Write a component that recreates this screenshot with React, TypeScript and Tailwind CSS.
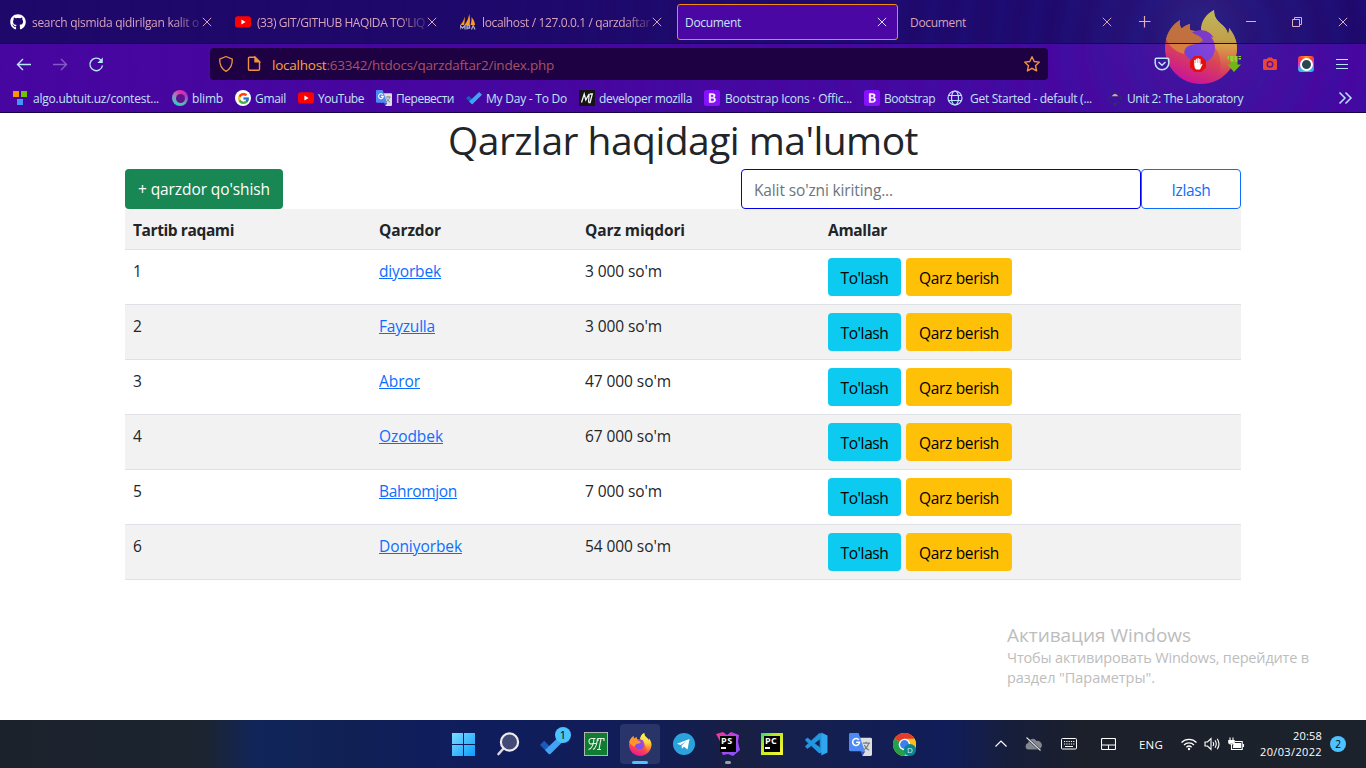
import { useLayoutEffect, useRef, type ReactNode } from "react";
import { FaGithub } from "react-icons/fa";
import { FcGoogle } from "react-icons/fc";
import { VscVscode } from "react-icons/vsc";

/** Single-line text whose letter spacing is adjusted so it spans `w` pixels. */
function Fit({ w, className = "", children }: { w: number; className?: string; children: ReactNode }) {
  const ref = useRef<HTMLSpanElement>(null);
  useLayoutEffect(() => {
    const el = ref.current;
    if (!el) return;
    el.style.letterSpacing = "0px";
    const natural = el.getBoundingClientRect().width;
    const count = (el.textContent || "").length;
    el.style.letterSpacing = `${(w - natural) / count}px`;
  }, [w]);
  return (
    <span ref={ref} className={`inline-block whitespace-pre ${className}`}>
      {children}
    </span>
  );
}

/* ---------- small logos ---------- */

function YouTube() {
  return (
    <svg width="16" height="16" viewBox="0 0 16 16">
      <rect x="0" y="2.2" width="16" height="11.4" rx="2.8" fill="#f00" />
      <path d="M6.4 5.6v4.8L10.6 8z" fill="#fff" />
    </svg>
  );
}

function PhpMyAdmin() {
  return (
    <svg width="16" height="16" viewBox="0 0 16 16">
      <path d="M4.500 2.500c.5 3 .2 6-.5 8.500H.5c2-2.500 3.500-5 4-8.500zM9.200 0c1 4 1 7.500.4 11H4.500c2.500-3 4-7 4.700-11zM11.500 3c2.200 2.500 3.300 5 3.500 8h-4.500c.9-3 1.200-5 1-8z" fill="#fb9a1c" />
      <path d="M0 15.500v-4l2.500 2.500L5 11.500v4M7 15.500v-4h2.500v2.500H7M11.500 15.500l1.700-4 1.800 4" stroke="#a9adc2" fill="none" strokeWidth="1.300" />
    </svg>
  );
}

function Translate({ size }: { size: number }) {
  return (
    <svg width={size} height={size} viewBox="0 0 24 24">
      <path d="M10 5h12.500A1.500 1.500 0 0 1 24 6.500v16a1.500 1.500 0 0 1-1.500 1.500H14z" fill="#dedede" />
      <path d="M14.500 10.500h7.500M18 9v1.500M20.500 10.500c-.6 3-2.500 5.500-5 7M16 12.500c1 2.500 3 4.500 5 5.500" stroke="#6b7f86" fill="none" strokeWidth="1.300" />
      <path d="M14 24l-2-5h5z" fill="#3458c0" />
      <path d="M1.500 0H10l6.500 19h-15A1.500 1.500 0 0 1 0 17.500v-16A1.500 1.500 0 0 1 1.500 0z" fill="#4f8af4" />
      <path d="M10.300 7.200A3.600 3.600 0 1 0 11 9.600H7.500" stroke="#fff" fill="none" strokeWidth="1.600" />
    </svg>
  );
}

function TodoCheck({ size }: { size: number }) {
  return (
    <svg width={size} height={size} viewBox="0 0 24 24">
      <path d="M0 12.500L4 8.500l8.500 8.300-4.100 4.200z" fill="#185abd" />
      <path d="M8.400 21L4.800 17.300 19.700 3 24 7.200 10 21q-.8.7-1.600 0z" fill="#40a4f2" />
    </svg>
  );
}

function Bootstrap() {
  return (
    <svg width="16" height="16" viewBox="0 0 16 16">
      <rect width="16" height="16" rx="2.500" fill="#8512fa" />
      <path d="M5.200 3.500h3.300c1.700 0 2.700.8 2.700 2.100 0 1-.6 1.700-1.500 2 1.200.2 1.900 1 1.900 2.200 0 1.700-1.200 2.700-3.200 2.700H5.200zm1.500 1.200v2.500h1.400c1.100 0 1.600-.4 1.600-1.300 0-.8-.5-1.200-1.500-1.200zm0 3.600v3h1.600c1.200 0 1.800-.5 1.800-1.500s-.7-1.500-1.900-1.500z" fill="#fff" stroke="#fff" strokeWidth=".4" />
    </svg>
  );
}

function Firefox({ size }: { size: number }) {
  return (
    <svg width={size} height={size} viewBox="0 0 74 74">
      <defs>
        <linearGradient id="fxBody" x1=".8" y1="0" x2=".4" y2="1">
          <stop offset="0" stopColor="#fff044" />
          <stop offset=".35" stopColor="#ffa51f" />
          <stop offset=".65" stopColor="#ff4f45" />
          <stop offset="1" stopColor="#ee1496" />
        </linearGradient>
        <linearGradient id="fxCore" x1="1" y1="0" x2="0" y2="1">
          <stop offset="0" stopColor="#b04ae6" />
          <stop offset="1" stopColor="#6850ee" />
        </linearGradient>
        <linearGradient id="fxTail" x1="0" y1="0" x2="0" y2="1">
          <stop offset="0" stopColor="#fff44f" />
          <stop offset=".45" stopColor="#ffd83a" />
          <stop offset="1" stopColor="#ff7339" stopOpacity="0" />
        </linearGradient>
      </defs>
      <path d="M15 10c-1 3 0 6 1.500 8.500C19 16 22 15 25 14c-.5 2-.5 4 0 6l11 2c0-9 5-17 13-22 0 4 1 8 4 11 4 4 9 7 10 13 1-2 1-4 1-6 5 6 8 13 8 20 0 20-16 36-36 36S0 58 0 38C0 27 6 16 15 10z" fill="url(#fxBody)" />
      <path d="M22 27q6-7 14-7c6 0 10 3 13 8l-3-1c3 4 4 7 4 11 0 8-6 15-15 15s-16-7-16-15z" fill="url(#fxCore)" />
      <path d="M1 29C3 21 8 14 15 10c-1 3 0 6 1.500 8.500C19 16 22 15 25 14c-.5 3 0 7 3 9 3 2 8 3 10 7-2 4-8 4-12 5-4 1-7 4-7 9C11 42 5 37 1 29z" fill="#ff952a" />
      <path d="M36 20c0-9 5-16 13-20 0 4 1 8 4 11 4 4 9 7 10 13 1-2 1-4 1-6 5 6 8 13 8 20 0 12-7 24-18 29 3-11 2-23-4-29 0-5-1-8-4-11l3 1c-3-5-7-8-13-8z" fill="url(#fxTail)" />
    </svg>
  );
}

const Close = ({ size = 10 }: { size?: number }) => (
  <svg width={size} height={size} viewBox="0 0 10 10" fill="none" stroke="currentColor" strokeWidth="1">
    <path d="M.8.8l8.400 8.400M9.200.8L.8 9.200" />
  </svg>
);

/* ---------- browser chrome ---------- */

function Tab({ icon, title, w, active = false }: { icon?: ReactNode; title: string; w: number; active?: boolean }) {
  return (
    <div
      className={`flex h-9 w-[221px] shrink-0 items-center rounded-[3px] border pr-[10px] pl-[7px] ${
        active ? "border-[#f98a10] bg-[#4b07a3] text-[#c5e4f8]" : "border-transparent text-[#d9a3b9]"
      }`}
    >
      {icon && <div className="mr-[6px] flex w-4 shrink-0 justify-center">{icon}</div>}
      <div
        className={`min-w-0 flex-1 translate-y-px overflow-hidden text-[12px] leading-5 ${
          icon ? "[mask-image:linear-gradient(to_right,#000_84%,transparent_104%)]" : ""
        }`}
      >
        <Fit w={w}>{title}</Fit>
      </div>
      <div className="ml-[2px] shrink-0">
        <Close />
      </div>
    </div>
  );
}

function Toolbar() {
  return (
    <div className="flex h-10 items-center">
      <div className="flex w-[210px] gap-[18px] pl-[15px] text-[#b5e6fb]">
        <svg width="18" height="18" viewBox="0 0 18 18" fill="none" stroke="currentColor" strokeWidth="1.400">
          <path d="M16 9.500H2.500M8 4L2.500 9.500 8 15" />
        </svg>
        <svg width="18" height="18" viewBox="0 0 18 18" fill="none" stroke="#815ac5" strokeWidth="1.400">
          <path d="M2 9.500h13.500M10 4l5.500 5.500L10 15" />
        </svg>
        <svg width="18" height="18" viewBox="0 0 18 18" fill="none" stroke="currentColor" strokeWidth="1.400">
          <path d="M14 5.200A6.300 6.300 0 1 0 15.500 10.500" />
          <path d="M15.800 2.500v5.500H10.300z" fill="currentColor" stroke="none" />
        </svg>
      </div>
      <div className="flex h-8 w-[838px] items-center rounded bg-[#1d0143] pr-[7px] pl-[8px] text-[#ef9340]">
        <svg className="shrink-0" width="16" height="18" viewBox="0 0 16 18" fill="none" stroke="currentColor" strokeWidth="1.300">
          <path d="M8 1.500l6.300 2.600c.2 6-1.800 9.900-6.300 12.200C3.500 14 1.500 10 1.700 4.100z" strokeLinejoin="round" />
        </svg>
        <svg className="ml-[13px] shrink-0" width="14" height="16" viewBox="0 0 14 16" fill="none" stroke="currentColor" strokeWidth="1.400">
          <path d="M1.500 2.200q0-1 1-1H8l4.500 4.500v7.600q0 1-1 1h-9q-1 0-1-1z" />
          <path d="M8 1.200v4.500h4.500z" fill="currentColor" />
        </svg>
        <div className="ml-[11px] flex-1 translate-y-px text-[13.5px] leading-5">
          <Fit w={282} className="text-[#a65364]">
            <span className="text-[#fca336]">localhost</span>:63342/htdocs/qarzdaftar2/index.php
          </Fit>
        </div>
        <svg width="18" height="18" viewBox="0 0 18 18" fill="none" stroke="currentColor" strokeWidth="1.400" strokeLinejoin="round">
          <path d="M9 1.700l2.200 4.800 5.200.6-3.900 3.600 1.100 5.200L9 13.300l-4.600 2.600 1.100-5.200-3.900-3.600 5.200-.6z" />
        </svg>
      </div>
      <div className="ml-[105px] flex items-center gap-[18px] text-[#b5e6fb]">
        <svg width="18" height="16" viewBox="0 0 18 16" fill="none" stroke="currentColor" strokeWidth="1.500">
          <path d="M3.500 2.200h11q1.300 0 1.300 1.300V7a6.800 6.800 0 0 1-13.600 0V3.500q0-1.300 1.300-1.300z" />
          <path d="M5.500 6L9 9.200 12.500 6" />
        </svg>
        <svg width="18" height="18" viewBox="0 0 18 18">
          <path d="M5.700 1h6.600L17 5.700v6.600L12.300 17H5.700L1 12.300V5.700z" fill="#e50d0d" />
          <path d="M5.200 9.500V5.200q.8-.8 1.300 0V8h.3V3.900q.8-.8 1.400 0V8h.3V3.400q.8-.8 1.400 0V8h.3V4.200q.8-.8 1.300 0V10l1-1.300q1-.3.9.7L11 14.500H7.200Q5.200 13 5.200 9.500z" fill="#fff" />
        </svg>
        <svg width="18" height="18" viewBox="0 0 18 18">
          <path d="M5.500 6h7v3.500H16L9 17 2 9.500h3.500z" fill="#70b715" />
          <path d="M2.500 1H4v3.500H2.500zM5 1h3v5.500H5.500zM8.500 1h1v5.500h-1zM10 1h2.500v5.500H10zM13.500 1h2.500v1h-2.500zm0 2h2.500v1.500h-2.500z" fill="#8fd62e" />
        </svg>
        <svg width="18" height="18" viewBox="0 0 18 18">
          <path d="M3.500 4H6l1-1.500h4L12 4h2.500Q16 4 16 5.500v8q0 1.500-1.500 1.500h-11Q2 15 2 13.500v-8Q2 4 3.500 4z" fill="#eb4537" />
          <circle cx="9" cy="9.300" r="2.800" fill="none" stroke="#5a16a0" strokeWidth="1.500" />
        </svg>
        <div className="flex size-[18px] items-center justify-center">
          <div className="flex size-4 items-center justify-center rounded-[3px] bg-[conic-gradient(#ff9d1c,#ff3b30,#c83cf0,#27b7f5,#2bd8b0,#38b9f5,#ec2ad1,#ff3b30,#ff9d1c)]">
            <div className="size-[13px] rounded-full border-2 border-white bg-[#2c4650]" />
          </div>
        </div>
        <svg width="18" height="18" viewBox="0 0 18 18" stroke="currentColor" strokeWidth="1.200">
          <path d="M3 4.500h12M3 9.500h12M3 13.500h12" />
        </svg>
      </div>
    </div>
  );
}

const bookmarks: { icon: ReactNode; label: string; w: number; box: string }[] = [
  {
    icon: (
      <svg width="16" height="16" viewBox="0 0 16 16">
        <path d="M1 1h6v6H1z" fill="#ff9200" />
        <path d="M9 1h6v6H9z" fill="#6cc400" />
        <path d="M5 9h6v6H5z" fill="#4396f5" />
      </svg>
    ),
    label: "algo.ubtuit.uz/contest...",
    w: 126,
    box: "w-[160px] gap-[5px]",
  },
  {
    icon: (
      <span className="flex size-4 items-center justify-center rounded-full bg-[conic-gradient(#e42bab,#a63ec0,#53b9b0,#36c9bd,#8b91bd,#e9329d)]">
        <span className="size-[9px] rounded-full bg-[#61108f]" />
      </span>
    ),
    label: "blimb",
    w: 31,
    box: "w-[63px] gap-[4px]",
  },
  {
    icon: (
      <span className="flex size-4 items-center justify-center rounded-full bg-white">
        <FcGoogle size={13} />
      </span>
    ),
    label: "Gmail",
    w: 31,
    box: "w-[63px] gap-[4px]",
  },
  { icon: <YouTube />, label: "YouTube", w: 46, box: "w-[78px] gap-[4px]" },
  { icon: <Translate size={16} />, label: "Перевести", w: 58, box: "w-[90px] gap-[4px]" },
  { icon: <TodoCheck size={16} />, label: "My Day - To Do", w: 81, box: "w-[113px] gap-[4px]" },
  {
    icon: (
      <svg width="16" height="16" viewBox="0 0 16 16">
        <path d="M0 0h16v16H0z" fill="#151515" />
        <path d="M2.500 12.500L5.200 4l1.600 6 3.300-6-.6 8.500M9.500 12.500h1.600L13.300 4h-2.500" stroke="#f4f4f4" fill="none" strokeWidth="1.300" />
      </svg>
    ),
    label: "developer mozilla",
    w: 93,
    box: "w-[125px] gap-[4px]",
  },
  { icon: <Bootstrap />, label: "Bootstrap Icons · Offic...", w: 127, box: "w-[160px] gap-[5px]" },
  { icon: <Bootstrap />, label: "Bootstrap", w: 51, box: "w-[83px] gap-[4px]" },
  {
    icon: (
      <svg width="16" height="16" viewBox="0 0 16 16" fill="none" stroke="#b5e6fb" strokeWidth="1.200">
        <circle cx="8" cy="8" r="7" />
        <ellipse cx="8" cy="8" rx="3.500" ry="7" />
        <path d="M1.500 5.500h13M1.500 10.500h13" />
      </svg>
    ),
    label: "Get Started - default (...",
    w: 122,
    box: "w-[160px] gap-[7px]",
  },
  {
    icon: (
      <svg width="16" height="16" viewBox="0 0 16 16">
        <circle cx="8" cy="8" r="6" fill="none" stroke="#2b2a6a" strokeWidth="1.800" strokeDasharray="2.500 1.800" />
        <path d="M4.500 6.500q3.500-5.500 7 0z" fill="#d7a1b5" />
        <path d="M4.500 6.500h7V8h-7z" fill="#332344" />
        <path d="M6.500 13h3v2h-3z" fill="#303463" />
      </svg>
    ),
    label: "Unit 2: The Laboratory",
    w: 116,
    box: "w-[231px] gap-[4px]",
  },
];

function Browser() {
  return (
    <header className="relative h-[113px] overflow-hidden border-b border-[#190343] bg-[radial-gradient(circle_at_1202px_20px,rgba(70,60,150,0.5)_0px,rgba(60,45,150,0.3)_60px,transparent_150px),linear-gradient(to_bottom,#20096b_43px,#4806a0_43px)]">
      <div className="absolute inset-0 bg-[repeating-radial-gradient(circle_at_1202px_48px,rgba(30,40,170,0.2)_0px,rgba(90,10,170,0.03)_17px,rgba(30,40,170,0.2)_34px)] [mask-image:linear-gradient(to_right,rgba(0,0,0,0.15)_30%,#000_80%)]" />
      <div className="absolute top-[10px] left-[1165px] opacity-80">
        <Firefox size={74} />
      </div>
      <div className="relative flex h-11 items-center border-b border-[#190653] bg-[#180a63]/10 pl-[2px]">
        <div className="flex gap-1">
          <Tab icon={<FaGithub size={16} color="#fff" />} title="search qismida qidirilgan kalit o" w={167} />
          <Tab icon={<YouTube />} title="(33) GIT/GITHUB HAQIDA TO'LIQ" w={168} />
          <Tab icon={<PhpMyAdmin />} title="localhost / 127.0.0.1 / qarzdaftar" w={168} />
          <Tab title="Document" w={56} active />
          <Tab title="Document" w={56} />
        </div>
        <div className="flex flex-1 items-center text-[#deb0bd]">
          <svg className="ml-[15px]" width="13" height="13" viewBox="0 0 13 13" stroke="currentColor" strokeWidth="1.200">
            <path d="M6.500 1v11.500M1 6.500h11.500" />
          </svg>
          <svg className="ml-[95px]" width="10" height="12" viewBox="0 0 10 12" stroke="currentColor">
            <path d="M0 5.500h10" />
          </svg>
          <svg className="ml-[36px]" width="10" height="10" viewBox="0 0 10 10" stroke="currentColor" fill="none">
            <path d="M.5 2.500h7v7h-7zM2.500 2.500v-2h7v7h-2" />
          </svg>
          <div className="ml-[36px]">
            <Close />
          </div>
        </div>
      </div>
      <div className="relative">
        <Toolbar />
        <div className="flex h-[28px] items-center pl-[12px] text-[12px] leading-5 text-[#c0e4f9]">
          {bookmarks.map((b, i) => (
            <div key={i} className={`flex shrink-0 items-center ${b.box}`}>
              {b.icon}
              <Fit w={b.w} className="translate-y-px">{b.label}</Fit>
            </div>
          ))}
          <svg width="15" height="14" viewBox="0 0 15 14" fill="none" stroke="#b5e6fb" strokeWidth="1.500">
            <path d="M1.500 1.500L7 7l-5.500 5.500M7.500 1.500L13 7l-5.500 5.500" />
          </svg>
        </div>
      </div>
    </header>
  );
}

/* ---------- page ---------- */

const debtors = [
  { name: "diyorbek", nameW: 62, sum: "3 000 so'm", sumW: 77 },
  { name: "Fayzulla", nameW: 56, sum: "3 000 so'm", sumW: 77 },
  { name: "Abror", nameW: 41, sum: "47 000 so'm", sumW: 86 },
  { name: "Ozodbek", nameW: 64, sum: "67 000 so'm", sumW: 86 },
  { name: "Bahromjon", nameW: 78, sum: "7 000 so'm", sumW: 77 },
  { name: "Doniyorbek", nameW: 83, sum: "54 000 so'm", sumW: 86 },
];

const columns = "grid grid-cols-[246px_206px_243px_1fr] border-b border-[#dee2e6] px-2";

function Page() {
  return (
    <main className="h-[607px] bg-white text-[#212529]">
      <div className="mx-auto w-[1116px]">
        <h1 className="h-14 text-center text-[39px] leading-[53px]">
          <Fit w={470}>Qarzlar haqidagi ma'lumot</Fit>
        </h1>
        <div className="flex h-10 justify-between text-[15.5px]">
          <button className="w-[158px] rounded bg-[#198754] leading-[40px] text-white">
            <Fit w={132}>+ qarzdor qo'shish</Fit>
          </button>
          <div className="flex">
            <div className="w-[400px] rounded border border-[#0000e8] pl-3 leading-[41px] text-[#6c757d]">
              <Fit w={139}>Kalit so'zni kiriting...</Fit>
            </div>
            <button className="w-[100px] rounded border border-[#0d6efd] leading-[41px] text-[#0d6efd]">
              <Fit w={39}>Izlash</Fit>
            </button>
          </div>
        </div>
        <div className="text-[15.5px]">
          <div className={`${columns} h-[41px] bg-[#f2f2f2] leading-[42px] font-bold`}>
            <div><Fit w={101}>Tartib raqami</Fit></div>
            <div><Fit w={62}>Qarzdor</Fit></div>
            <div><Fit w={100}>Qarz miqdori</Fit></div>
            <div><Fit w={59}>Amallar</Fit></div>
          </div>
          {debtors.map((d, i) => (
            <div key={d.name} className={`${columns} h-[55px] pt-2 leading-[26px] ${i % 2 ? "bg-[#f2f2f2]" : "bg-white"}`}>
              <div>{i + 1}</div>
              <div>
                <a className="text-[#0d6efd]">
                  <Fit w={d.nameW} className="underline">{d.name}</Fit>
                </a>
              </div>
              <div><Fit w={d.sumW}>{d.sum}</Fit></div>
              <div className="flex gap-[5px] text-black">
                <button className="h-[38px] w-[73px] rounded bg-[#0dcaf0] pt-px leading-[38px]">
                  <Fit w={48}>To'lash</Fit>
                </button>
                <button className="h-[38px] w-[106px] rounded bg-[#ffc107] pt-px leading-[38px]">
                  <Fit w={80}>Qarz berish</Fit>
                </button>
              </div>
            </div>
          ))}
        </div>
      </div>
      <div className="absolute top-[623px] left-[1007px] text-[#bdbdbd]">
        <div className="h-[25px] text-[19px] leading-6"><Fit w={184}>Активация Windows</Fit></div>
        <div className="text-[14.5px] leading-5"><Fit w={302}>Чтобы активировать Windows, перейдите в</Fit></div>
        <div className="text-[14.5px] leading-5"><Fit w={148}>раздел "Параметры".</Fit></div>
      </div>
    </main>
  );
}

/* ---------- taskbar ---------- */

function JetBrains({ label, green = false }: { label: string; green?: boolean }) {
  return (
    <div className="relative flex size-6 items-center justify-center">
      <svg className="absolute inset-0" width="24" height="24" viewBox="0 0 24 24">
        <defs>
          <linearGradient id="psG" x1="0" y1="0" x2="1" y2="1">
            <stop offset="0" stopColor="#ff318c" />
            <stop offset=".5" stopColor="#b345f1" />
            <stop offset="1" stopColor="#765af8" />
          </linearGradient>
          <linearGradient id="pcG" x1="0" y1="0" x2="1" y2="1">
            <stop offset="0" stopColor="#21d789" />
            <stop offset=".3" stopColor="#b4e61a" />
            <stop offset="1" stopColor="#fcf840" />
          </linearGradient>
        </defs>
        {green ? (
          <path d="M1 1h22v22H1z" fill="url(#pcG)" />
        ) : (
          <path d="M0 2l7-2 4 3 4-3 8 3-1 7 2 8-7 6-5-2-5 1-3-6 1-6z" fill="url(#psG)" />
        )}
      </svg>
      <div className="relative h-[16px] w-[16px] bg-black pl-px font-['Open_Sans'] text-[9px] leading-[10px] font-bold text-white">
        <Fit w={12}>{label}</Fit>
        <div className="mt-px h-[1.500px] w-[5px] bg-white" />
      </div>
    </div>
  );
}

function Taskbar() {
  const slot = "flex h-10 w-11 items-center justify-center";
  return (
    <footer className="relative flex h-12 items-center bg-[linear-gradient(to_right,#1c222c_0px,#1b2430_205px,#11255a_255px,#102054_350px,#101d5e_440px,#101d59_640px,#181f43_740px,#15204e_800px,#101d59_950px,#171e3b_1010px,#1b202b_1080px,#1c222c_1366px)] text-white">
      <div className="ml-[442px] flex">
        <div className={slot}>
          <svg width="24" height="24" viewBox="0 0 24 24">
            <defs>
              <linearGradient id="winG" gradientUnits="userSpaceOnUse" x1="0" y1="0" x2="24" y2="24">
                <stop offset="0" stopColor="#80deff" />
                <stop offset="1" stopColor="#079bff" />
              </linearGradient>
            </defs>
            <path d="M0 1h11v11H0zM12 1h11v11H12zM0 13h11v11H0zM12 13h11v11H12z" fill="url(#winG)" />
          </svg>
        </div>
        <div className={slot}>
          <svg width="24" height="24" viewBox="0 0 24 24" fill="none">
            <path d="M2.500 22l5-5.500" stroke="#d7d8dc" strokeWidth="2.600" strokeLinecap="round" />
            <circle cx="13.500" cy="10" r="8.600" stroke="#ececee" strokeWidth="2.200" fill="#424a75" />
          </svg>
        </div>
        <div className={`${slot} relative`}>
          <TodoCheck size={25} />
          <div className="absolute top-[3px] left-[25px] size-4 rounded-full bg-[#4cc2ff] text-center text-[11px] leading-4 text-black">1</div>
        </div>
        <div className={slot}>
          <div className="flex size-6 items-center justify-center border border-[#aeb6ae] bg-[#107c32]">
            <svg width="18" height="16" viewBox="0 0 18 16" fill="none" stroke="#e9f1e5" strokeWidth="1.100">
              <path d="M4.500 2.500Q1.500 3 2 6t4 1.500M7 2.500Q6.500 12 1.500 13.500M4.500 2.500h4M10.500 2.500Q9.500 12 6 13.500M6 7.500h3.500M11 5V2.500h6V5M14 2.500L12 13.500M10 13.500h4" />
            </svg>
          </div>
        </div>
        <div className={`${slot} relative`}>
          <div className="absolute inset-y-0 left-[2px] w-10 rounded bg-white/10" />
          <div className="relative"><Firefox size={23} /></div>
          <div className="absolute bottom-0 left-[14px] h-[3px] w-4 rounded-full bg-[#4cc2ff]" />
        </div>
        <div className={slot}>
          <svg width="22" height="22" viewBox="0 0 22 22">
            <circle cx="11" cy="11" r="11" fill="#2aa3dc" />
            <path d="M4 10.800L16.500 6l-2 10.500-3.600-2.700-2 1.900-.4-3.300 5-4.200-6 3.800z" fill="#fff" />
          </svg>
        </div>
        <div className={`${slot} relative`}>
          <JetBrains label="PS" />
          <div className="absolute bottom-0 left-[19px] h-[3px] w-[6px] rounded-full bg-[#9c9fa9]" />
        </div>
        <div className={slot}><JetBrains label="PC" green /></div>
        <div className={slot}>
          <div className="relative size-6">
            <VscVscode className="absolute inset-0" size={24} color="#2396e0" stroke="#2396e0" strokeWidth={0.5} />
            <svg className="absolute inset-0" width="24" height="24" viewBox="0 0 24 24">
              <path d="M17.300.5L23.500 3.500v17l-6.200 3z" fill="#30a6ee" />
            </svg>
          </div>
        </div>
        <div className={slot}><Translate size={23} /></div>
        <div className={`${slot} relative`}>
          <svg width="23" height="23" viewBox="0 0 24 24">
            <circle cx="12" cy="12" r="12" fill="#fbc116" />
            <path d="M12 12L1.600 6A12 12 0 0 1 22.400 6z" fill="#e33b2e" />
            <path d="M1.600 6A12 12 0 0 0 12 24l5.200-9-5.200-3z" fill="#24a148" />
            <path d="M12 6h10.400A12 12 0 0 1 12 24l5.200-9z" fill="#fbc116" />
            <circle cx="12" cy="12" r="6" fill="#fff" />
            <circle cx="12" cy="12" r="4.600" fill="#3f7fec" />
          </svg>
          <div className="absolute top-[20px] left-[22px] size-3 rounded-full bg-[#07868f] text-center text-[8px] leading-3 text-[#c8f0ef]">D</div>
        </div>
      </div>
      <div className="flex flex-1 items-center">
        <svg className="ml-[69px]" width="12" height="8" viewBox="0 0 12 8" fill="none" stroke="#fff" strokeWidth="1.200">
          <path d="M.5 6.500L6 1l5.500 5.500" />
        </svg>
        <svg className="ml-[18px]" width="17" height="14" viewBox="0 0 17 14">
          <path d="M3.500 12.500a3.300 3.300 0 0 1-.3-6.500A4.500 4.500 0 0 1 11.500 4a4 4 0 0 1 2 8.500z" fill="#83878e" />
          <path d="M1.500.5l14 13" stroke="#1b202b" strokeWidth="2.200" />
          <path d="M1.500.5l14 13" stroke="#e5e5e7" strokeWidth="1.100" />
        </svg>
        <svg className="ml-[19px]" width="16" height="12" viewBox="0 0 16 12" fill="none" stroke="#fff">
          <rect x=".5" y=".5" width="15" height="10.500" rx="1" />
          <path d="M3 3.500h10.500M3 6h10.500" strokeDasharray="1.200 1.100" />
          <path d="M4 8.500h8" />
        </svg>
        <svg className="ml-[24px]" width="15" height="12" viewBox="0 0 15 12" fill="none" stroke="#fff" strokeWidth="1.100">
          <rect x=".5" y=".5" width="14" height="11" rx="1" />
          <path d="M.5 7h14M7.500 7v4.500" />
        </svg>
        <div className="ml-[23px] translate-y-px text-[11.5px] leading-4"><Fit w={24}>ENG</Fit></div>
        <svg className="ml-[17px]" width="18" height="14" viewBox="0 0 18 14" fill="none" stroke="#fff" strokeWidth="1.300">
          <path d="M1.500 5.500a10.500 10.500 0 0 1 15 0M4 8a7 7 0 0 1 10 0M6.400 10.200a3.800 3.800 0 0 1 5.200 0" />
          <circle cx="9" cy="12" r="1.200" fill="#fff" stroke="none" />
        </svg>
        <svg className="ml-[6px]" width="17" height="14" viewBox="0 0 17 14" fill="none" stroke="#fff" strokeWidth="1.100">
          <path d="M1 5h2.500L7 1.500v11L3.500 9H1z" />
          <path d="M9 5q1.300 2 0 4M11 3.300q2.500 3.700 0 7.400M13.200 1.700q3.600 5.300 0 10.600" />
        </svg>
        <svg className="ml-[7px]" width="17" height="14" viewBox="0 0 17 14" fill="none" stroke="#fff" strokeWidth="1.100">
          <path d="M2 .5v3M5 .5v3M1 3.500h5v2q0 1.500-1.500 1.500h-2Q1 7 1 5.500zM3.500 7v5.500h10.700v-8H7M15.500 7v3" />
          <path d="M1 3.500h5V6H1zM6 6.500h6.500v4H5.500z" fill="#fff" />
        </svg>
      </div>
      <div className="mr-[8px] text-right text-[11px] leading-4">
        <div><Fit w={29}>20:58</Fit></div>
        <div><Fit w={62}>20/03/2022</Fit></div>
      </div>
      <div className="mr-[20px] size-4 rounded-full bg-[#4cc2ff] text-center text-[10px] leading-4 text-black">2</div>
    </footer>
  );
}

export default function App() {
  return (
    <div className="relative h-[768px] w-[1366px] overflow-hidden bg-white font-['Open_Sans','Noto_Sans',sans-serif]">
      <Browser />
      <Page />
      <Taskbar />
    </div>
  );
}
